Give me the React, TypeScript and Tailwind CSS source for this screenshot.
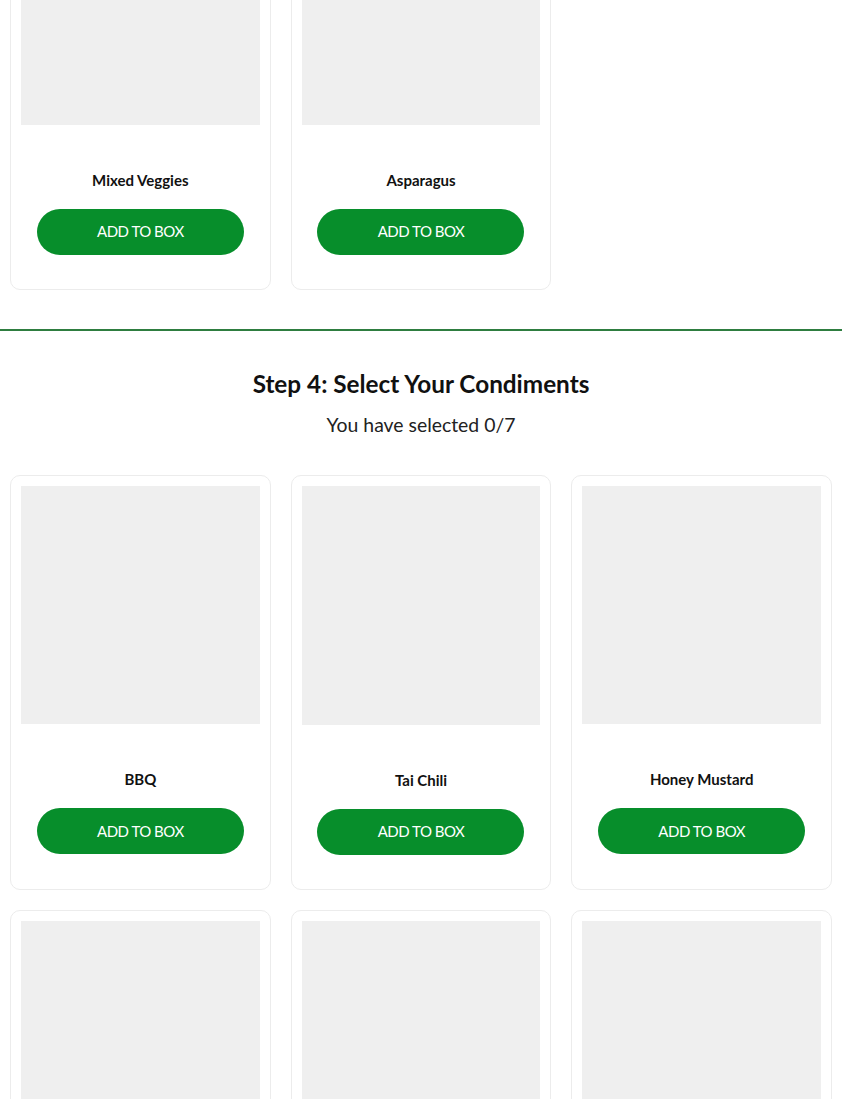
import React from "react";

function Card({ name }: { name: string }) {
  return (
    <div className="flex flex-col items-center rounded-[10px] border border-[#ececec] bg-white p-[10px]">
      <div className="aspect-square w-full bg-[#efefef]" />
      <div className="mt-[43px] text-[15px] font-bold leading-[24px] text-[#111]">{name}</div>
      <button className="mt-[17px] mb-[24px] h-[46px] w-[207px] rounded-full bg-[#078e2b] text-[15px] uppercase leading-none tracking-[-0.5px] text-white">
        Add to box
      </button>
    </div>
  );
}

export default function App() {
  return (
    <div className="h-[1099px] overflow-hidden bg-white" style={{ fontFamily: "Lato, 'Open Sans', sans-serif" }}>
      <section className="-mt-[125px] border-b-2 border-[#2e7d40] px-[10px] pb-[39px]">
        <div className="grid grid-cols-3 gap-[20px]">
          <Card name="Mixed Veggies" />
          <Card name="Asparagus" />
        </div>
      </section>
      <section className="px-[10px] pt-[38px]">
        <h2 className="text-center text-[24.3px] font-bold leading-[1.2] text-[#111]">Step 4: Select Your Condiments</h2>
        <p className="mt-[12px] text-center text-[19.4px] leading-[30px] text-[#222]">You have selected 0/7</p>
        <div className="mt-[35px] grid grid-cols-3 gap-[20px]">
          <Card name="BBQ" />
          <Card name="Tai Chili" />
          <Card name="Honey Mustard" />
          <Card name="Ranch" />
          <Card name="Ketchup" />
          <Card name="Hot Sauce" />
        </div>
      </section>
    </div>
  );
}
